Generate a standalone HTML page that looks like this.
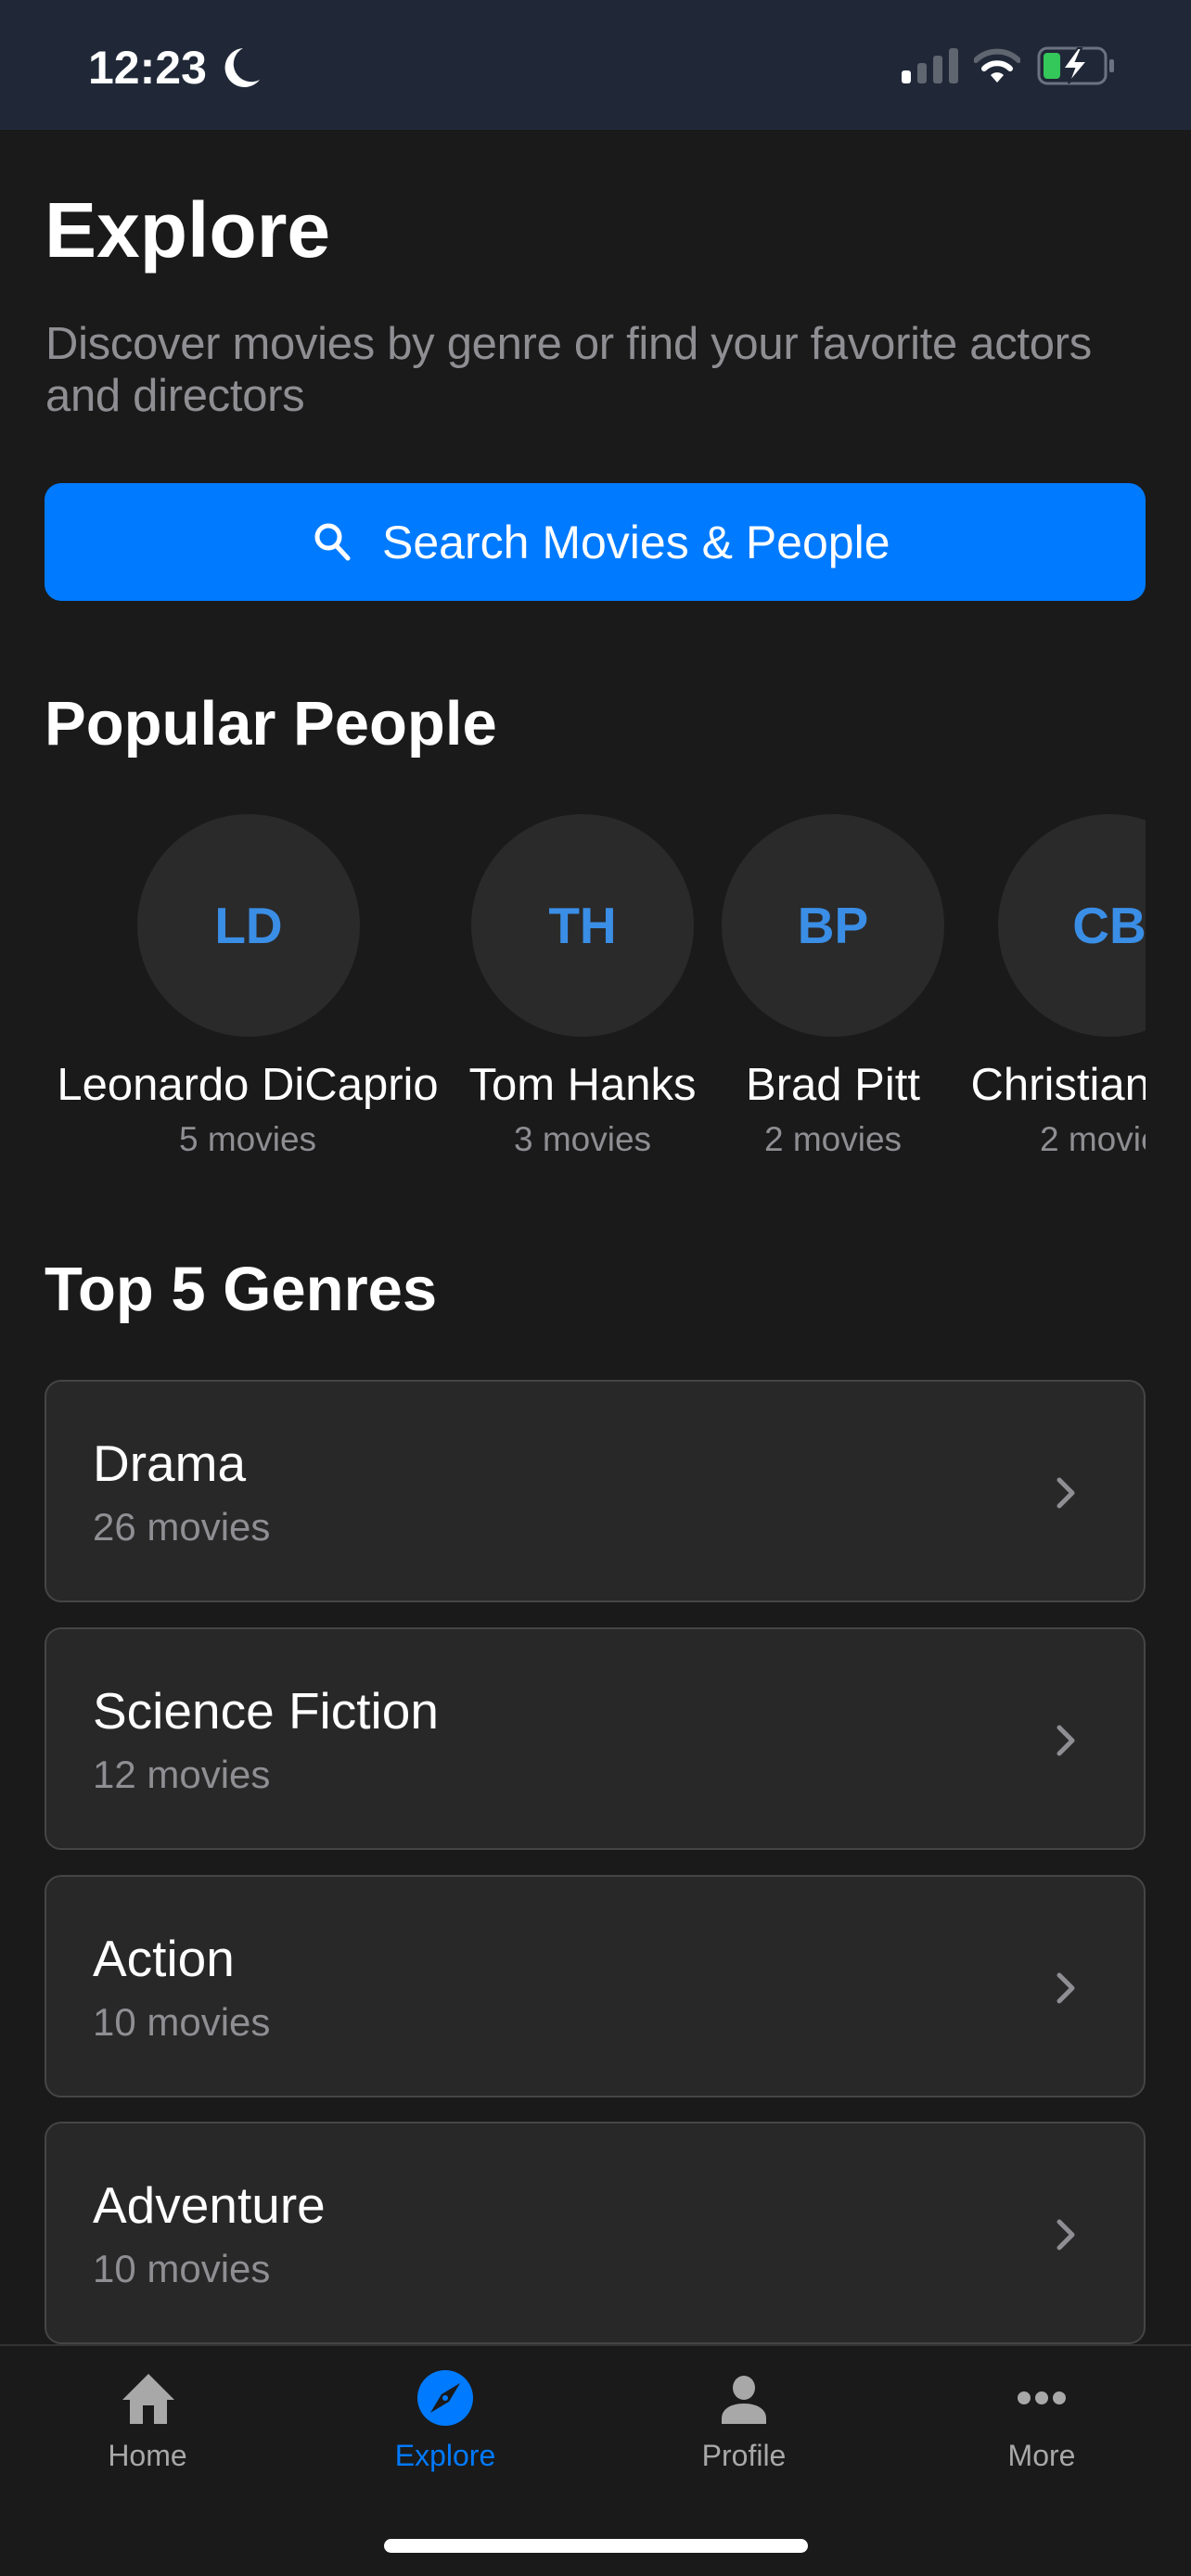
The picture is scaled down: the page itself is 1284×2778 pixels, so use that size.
<!DOCTYPE html>
<html><head><meta charset="utf-8"><style>
*{margin:0;padding:0;box-sizing:border-box}
body{width:1284px;height:2778px;background:#1a1a1a;font-family:"Liberation Sans",sans-serif;position:relative;overflow:hidden;color:#fff}
.a{position:absolute;white-space:nowrap}
.circ{position:absolute;top:878px;width:240px;height:240px;border-radius:50%;background:#2a2a2a;color:#3a8ee6;font-weight:bold;font-size:55px;display:flex;align-items:center;justify-content:center}
.nm{position:absolute;top:1142px;font-size:49px;transform:translateX(-50%);white-space:nowrap}
.mv{position:absolute;top:1208px;font-size:37px;color:#8e8e93;transform:translateX(-50%);white-space:nowrap}
.card{position:absolute;left:48px;width:1187px;height:240px;background:#282828;border:2px solid #454545;border-radius:18px}
.card .t{position:absolute;left:50px;top:56px;font-size:55px}
.card .s{position:absolute;left:50px;top:133px;font-size:42px;color:#8e8e93}
.card svg{position:absolute;left:1086px;top:100px}
.tab{position:absolute;top:2630px;font-size:32px;color:#a8a8a8;transform:translateX(-50%)}
</style></head><body>
<div class="a" style="left:0;top:0;width:1284px;height:140px;background:#202838"></div>
<div class="a" style="left:95px;top:44px;font-size:50px;font-weight:bold">12:23</div>
<svg class="a" style="left:240px;top:50px" width="42" height="46" viewBox="0 0 42 46"><path d="M22 2A21 21 0 1 0 40 36 19 19 0 0 1 22 2Z" fill="#fff"/></svg>
<svg class="a" style="left:972px;top:52px" width="62" height="38"><rect x="0" y="24" width="10" height="14" rx="3" fill="#fff"/><rect x="17" y="16" width="10" height="22" rx="3" fill="#5f6670"/><rect x="34" y="8" width="10" height="30" rx="3" fill="#5f6670"/><rect x="51" y="0" width="10" height="38" rx="3" fill="#5f6670"/></svg>
<svg class="a" style="left:1050px;top:52px" width="50" height="38" viewBox="0 0 50 38"><path d="M2 13A33 33 0 0 1 48 13" stroke="#5f6670" stroke-width="6" fill="none" stroke-linecap="round"/><path d="M11 22A20 20 0 0 1 39 22" stroke="#fff" stroke-width="6" fill="none" stroke-linecap="round"/><path d="M18 29L25 37 32 29A10 10 0 0 0 18 29Z" fill="#fff"/></svg>
<svg class="a" style="left:1118px;top:50px" width="84" height="42" viewBox="0 0 84 42"><rect x="2" y="2" width="72" height="38" rx="9" stroke="#6b7280" stroke-width="3" fill="none"/><rect x="78" y="14" width="5" height="14" rx="2" fill="#6b7280"/><rect x="7" y="7" width="18" height="28" rx="4" fill="#34c759"/><path d="M44 2L28 24H40L34 40 54 16H42L48 2Z" fill="#fff" stroke="#202838" stroke-width="2"/></svg>

<div class="a" style="left:48px;top:200px;font-size:84px;font-weight:bold">Explore</div>
<div class="a" style="left:49px;top:343px;font-size:49px;color:#8e8e93;line-height:56px;letter-spacing:-0.3px">Discover movies by genre or find your favorite actors<br>and directors</div>
<div class="a" style="left:48px;top:521px;width:1187px;height:127px;background:#007aff;border-radius:18px"></div>
<svg class="a" style="left:338px;top:563px" width="42" height="44" viewBox="0 0 42 44"><circle cx="16" cy="16" r="12" stroke="#fff" stroke-width="5" fill="none"/><path d="M25 26L37 39" stroke="#fff" stroke-width="5" stroke-linecap="round"/></svg>
<div class="a" style="left:412px;top:556px;font-size:50px">Search Movies &amp; People</div>

<div class="a" style="left:48px;top:742px;font-size:67px;font-weight:bold">Popular People</div>
<div class="a" style="left:0;top:860px;width:1235px;height:420px;overflow:hidden">
<div class="circ" style="left:148px;top:18px">LD</div>
<div class="circ" style="left:508px;top:18px">TH</div>
<div class="circ" style="left:778px;top:18px">BP</div>
<div class="circ" style="left:1076px;top:18px">CB</div>
<div class="nm" style="left:267px;top:282px">Leonardo DiCaprio</div>
<div class="nm" style="left:628px;top:282px">Tom Hanks</div>
<div class="nm" style="left:898px;top:282px">Brad Pitt</div>
<div class="nm" style="left:1199px;top:282px">Christian Bale</div>
<div class="mv" style="left:267px;top:348px">5 movies</div>
<div class="mv" style="left:628px;top:348px">3 movies</div>
<div class="mv" style="left:898px;top:348px">2 movies</div>
<div class="mv" style="left:1195px;top:348px">2 movies</div>
</div>

<div class="a" style="left:48px;top:1352px;font-size:67px;font-weight:bold">Top 5 Genres</div>
<div class="card" style="top:1488px"><div class="t">Drama</div><div class="s">26 movies</div><svg width="26" height="40" viewBox="0 0 26 40"><path d="M6 6L20 20 6 34" stroke="#8e8e93" stroke-width="5" fill="none" stroke-linecap="round" stroke-linejoin="round"/></svg></div>
<div class="card" style="top:1755px"><div class="t">Science Fiction</div><div class="s">12 movies</div><svg width="26" height="40" viewBox="0 0 26 40"><path d="M6 6L20 20 6 34" stroke="#8e8e93" stroke-width="5" fill="none" stroke-linecap="round" stroke-linejoin="round"/></svg></div>
<div class="card" style="top:2022px"><div class="t">Action</div><div class="s">10 movies</div><svg width="26" height="40" viewBox="0 0 26 40"><path d="M6 6L20 20 6 34" stroke="#8e8e93" stroke-width="5" fill="none" stroke-linecap="round" stroke-linejoin="round"/></svg></div>
<div class="card" style="top:2288px"><div class="t">Adventure</div><div class="s">10 movies</div><svg width="26" height="40" viewBox="0 0 26 40"><path d="M6 6L20 20 6 34" stroke="#8e8e93" stroke-width="5" fill="none" stroke-linecap="round" stroke-linejoin="round"/></svg></div>

<div class="a" style="left:0;top:2528px;width:1284px;height:250px;background:#1a1a1a;border-top:2px solid #333"></div>
<svg class="a" style="left:130px;top:2558px" width="60" height="56" viewBox="0 0 60 56"><path d="M30 2L58 30H50V56H36V36H24V56H10V30H2Z" fill="#a8a8a8"/></svg>
<svg class="a" style="left:450px;top:2556px" width="60" height="60" viewBox="0 0 60 60"><circle cx="30" cy="30" r="30" fill="#007aff"/><path d="M46 14L34 34 14 46 26 26Z" fill="#1a1a1a"/><circle cx="30" cy="30" r="3" fill="#007aff"/></svg>
<svg class="a" style="left:776px;top:2562px" width="52" height="52" viewBox="0 0 52 52"><ellipse cx="26" cy="13" rx="12" ry="13" fill="#a8a8a8"/><path d="M2 52V46C2 36 12 30 26 30S50 36 50 46V52Z" fill="#a8a8a8"/></svg>
<svg class="a" style="left:1096px;top:2576px" width="54" height="20"><circle cx="8" cy="10" r="7" fill="#a8a8a8"/><circle cx="27" cy="10" r="7" fill="#a8a8a8"/><circle cx="46" cy="10" r="7" fill="#a8a8a8"/></svg>
<div class="tab" style="left:159px">Home</div>
<div class="tab" style="left:480px;color:#007aff">Explore</div>
<div class="tab" style="left:802px">Profile</div>
<div class="tab" style="left:1123px">More</div>
<div class="a" style="left:414px;top:2738px;width:457px;height:15px;border-radius:8px;background:#fff"></div>
</body></html>
